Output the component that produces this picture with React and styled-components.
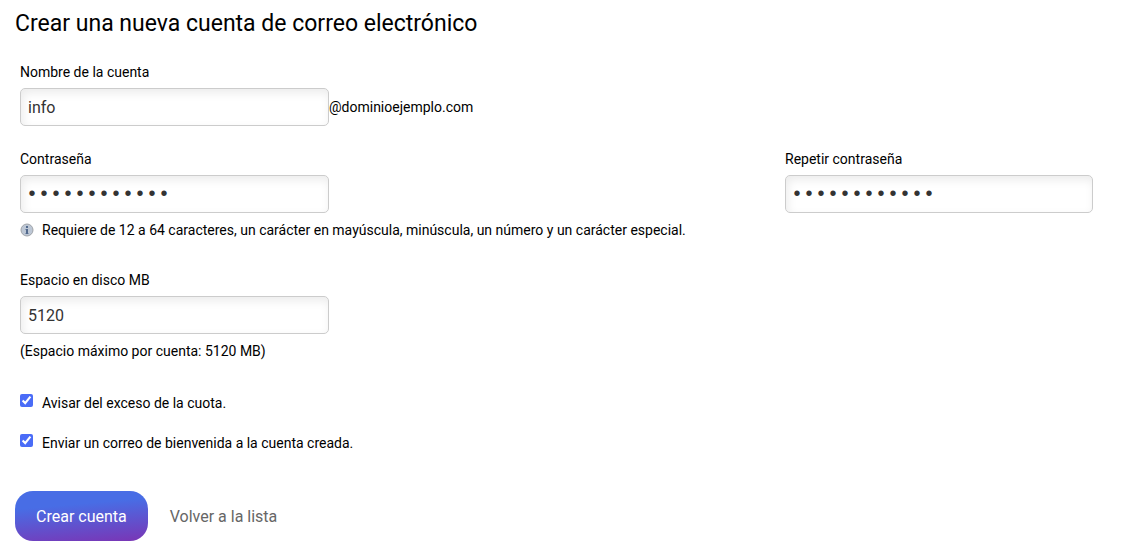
import React from 'react';
import styled, { createGlobalStyle } from 'styled-components';

const GlobalStyle = createGlobalStyle`
  * {
    box-sizing: border-box;
  }

  body {
    margin: 0;
    background: #fff;
    color: #000;
    font-family: Roboto, sans-serif;
    font-size: 14px;
    line-height: 20px;
  }
`;

const Page = styled.main`
  padding: 8px 15px 15px;
`;

const Title = styled.h1`
  margin: 0 0 22px;
  font-size: 23px;
  font-weight: 400;
  line-height: 32px;
`;

const Fields = styled.div`
  display: flex;
  flex-direction: column;
  padding: 0 26px 0 5px;
`;

const Row = styled.div`
  display: grid;
  grid-template-columns: minmax(0, 1fr) 308px;
  margin-bottom: ${({ $gap }) => $gap}px;
`;

const Field = styled.div`
  display: flex;
  flex-direction: column;
  align-items: flex-start;
`;

const Label = styled.label`
  margin-bottom: 6px;
`;

const InputGroup = styled.div`
  display: flex;
  align-items: center;
`;

const Input = styled.input`
  width: 309px;
  max-width: 100%;
  height: 38px;
  padding: 0 7px;
  border: 1px solid #ccc;
  border-radius: 5px;
  background: #fff;
  box-shadow: inset 2px 4px 10px rgba(0, 0, 0, 0.08);
  color: #333;
  font: inherit;
  font-size: 16px;
  outline: none;
`;

const PasswordInput = styled(Input)`
  padding: 0 5px;
  font-family: 'Liberation Mono', monospace;
  font-size: 20px;
`;

const Hint = styled.p`
  display: flex;
  align-items: center;
  gap: 8px;
  margin: 7px 0 0;
`;

const Check = styled.label`
  display: flex;
  align-items: center;
  gap: 9px;
  margin-bottom: 20px;
`;

const Checkbox = styled.input`
  width: 13px;
  height: 13px;
  margin: 0 0 5px;
  accent-color: #4a6cf7;
`;

const Actions = styled.div`
  display: flex;
  align-items: baseline;
  gap: 22px;
  margin-top: 18px;
`;

const SubmitButton = styled.button`
  height: 50px;
  padding: 2px 21px 0;
  border: 0;
  border-radius: 18px;
  background: linear-gradient(175deg, #486de5 30%, #7a35b5 100%);
  color: #fff;
  font: inherit;
  font-size: 16px;
  cursor: pointer;
`;

const BackLink = styled.a`
  color: #666;
  font-size: 16px;
  text-decoration: none;
`;

const InfoIcon = () => (
  <svg width='14' height='14' viewBox='0 0 14 14' aria-hidden='true'>
    <circle cx='7' cy='7' r='6' fill='#bdc7d5' stroke='#a0a4a9' />
    <path d='M6 3h2v2H6zM6 6h2v5H6z' fill='#536a8d' />
    <path d='M5 6h1v1H5zM5 10h1v1H5zM8 10h1v1H8z' fill='#8f9fb8' />
  </svg>
);

const App = () => {
  return (
    <>
      <GlobalStyle />
      <Page>
        <Title>Crear una nueva cuenta de correo electrónico</Title>
        <form onSubmit={(e) => e.preventDefault()}>
          <Fields>
            <Row $gap={23}>
              <Field>
                <Label htmlFor='account'>Nombre de la cuenta</Label>
                <InputGroup>
                  <Input id='account' type='text' defaultValue='info' />
                  <span>@dominioejemplo.com</span>
                </InputGroup>
              </Field>
            </Row>
            <Row $gap={30}>
              <Field>
                <Label htmlFor='password'>Contraseña</Label>
                <PasswordInput
                  id='password'
                  type='password'
                  defaultValue='Correo#2024x'
                />
                <Hint>
                  <InfoIcon />
                  Requiere de 12 a 64 caracteres, un carácter en mayúscula,
                  minúscula, un número y un carácter especial.
                </Hint>
              </Field>
              <Field>
                <Label htmlFor='repeat'>Repetir contraseña</Label>
                <PasswordInput
                  id='repeat'
                  type='password'
                  defaultValue='Correo#2024x'
                />
              </Field>
            </Row>
            <Row $gap={32}>
              <Field>
                <Label htmlFor='quota'>Espacio en disco MB</Label>
                <Input id='quota' type='text' defaultValue='5120' />
                <Hint>(Espacio máximo por cuenta: 5120 MB)</Hint>
              </Field>
            </Row>
            {/* Options */}
            <Check>
              <Checkbox type='checkbox' defaultChecked />
              Avisar del exceso de la cuota.
            </Check>
            <Check>
              <Checkbox type='checkbox' defaultChecked />
              Enviar un correo de bienvenida a la cuenta creada.
            </Check>
          </Fields>
          <Actions>
            <SubmitButton type='submit'>Crear cuenta</SubmitButton>
            <BackLink href='#lista'>Volver a la lista</BackLink>
          </Actions>
        </form>
      </Page>
    </>
  );
};

export default App;
